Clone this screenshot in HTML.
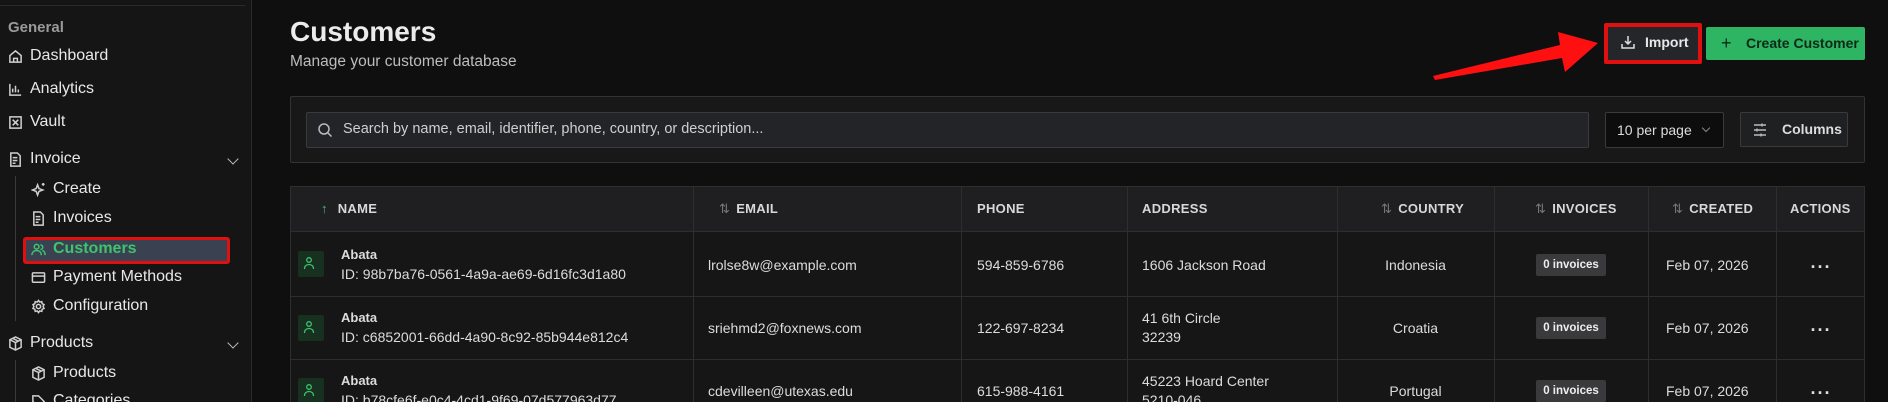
<!DOCTYPE html>
<html style="width:1888px;height:402px;overflow:hidden"><head><meta charset="utf-8"><style>
*{box-sizing:border-box;margin:0;padding:0}
body{width:1888px;height:402px;overflow:hidden;background:#0f0f0f;font-family:"Liberation Sans",sans-serif;color:#e6e6e6;position:relative}
.abs{position:absolute}
.sb{left:0;top:0;width:252px;height:402px;background:#151515;border-right:1px solid #2a2a2a}
.si{position:absolute;font-size:16px;color:#e8e8e8;display:flex;align-items:center;white-space:nowrap}
.si svg{width:15px;height:15px;margin-right:7px;stroke:#d0d0d0;fill:none;stroke-width:1.6}
.chev{position:absolute;left:229px;width:8px;height:8px;border-right:1.5px solid #bbb;border-bottom:1.5px solid #bbb;transform:rotate(45deg)}
.tbl{left:290px;top:186px;width:1575px;height:216px;border:1px solid #2e2e2e;border-bottom:none;background:#161616;overflow:hidden}
.hd{position:absolute;left:0;top:0;width:100%;height:45px;background:#1f1f21;border-bottom:1px solid #2e2e2e}
.vl{position:absolute;top:0;width:1px;height:240px;background:#2e2e2e}
.hl{position:absolute;left:0;width:100%;height:1px;background:#2e2e2e}
.ht{position:absolute;top:14px;font-size:13px;font-weight:bold;color:#d8d8d8;letter-spacing:.3px}
.ar{color:#777;font-weight:normal;margin-right:6px}
.c{position:absolute;font-size:14px;color:#dcdcdc;white-space:nowrap}
.cc{position:absolute;font-size:14px;color:#dcdcdc;text-align:center;left:1046px;width:157px}
.av{position:absolute;left:7px;width:26px;height:26px;background:#17301f;border-radius:2px}
.bd{position:absolute;left:1245px;width:70px;height:22px;background:#3a3a3c;font-size:11.5px;font-weight:bold;color:#eee;text-align:center;line-height:22px;border-radius:2px}
.dots{position:absolute;left:1485px;width:90px;text-align:center;font-size:18px;font-weight:bold;color:#ddd;letter-spacing:1px}
</style></head><body>
<div class="abs sb"></div>
<div class="abs" style="left:0;top:5px;width:245px;height:1px;background:#2a2a2a"></div>
<div class="si" style="left:8px;top:19px;color:#9a9a9a;font-weight:bold;font-size:15px">General</div>
<div class="si" style="left:8px;top:47px"><svg viewBox="0 0 16 16"><path d="M2 7l6-5 6 5v7H2z M6 14v-4h4v4"/></svg>Dashboard</div>
<div class="si" style="left:8px;top:80px"><svg viewBox="0 0 16 16"><path d="M2 2v12h12 M5 11V7 M8 11V4 M11 11V8"/></svg>Analytics</div>
<div class="si" style="left:8px;top:113px"><svg viewBox="0 0 16 16"><rect x="2" y="2" width="12" height="12"/><path d="M5 5l6 6M11 5l-6 6"/></svg>Vault</div>
<div class="si" style="left:8px;top:150px"><svg viewBox="0 0 16 16"><path d="M3 1h7l3 3v11H3z M5 6h5M5 9h5M5 12h3"/></svg>Invoice</div>
<div class="chev" style="top:155px"></div>
<div class="abs" style="left:15px;top:176px;width:1px;height:145px;background:#3a3a3a"></div>
<div class="si" style="left:31px;top:180px"><svg viewBox="0 0 16 16"><path d="M7 3l1.5 4 4 1.5-4 1.5L7 14l-1.5-4L1.5 8.5l4-1.5z M13 1v3M11.5 2.5h3"/></svg>Create</div>
<div class="si" style="left:31px;top:209px"><svg viewBox="0 0 16 16"><path d="M3 1h7l3 3v11H3z M5 6h5M5 9h5M5 12h3"/></svg>Invoices</div>
<div class="abs" style="left:23px;top:237px;width:207px;height:27px;border:3px solid #e01010;border-radius:3px;background:#3a4150"></div>
<div class="si" style="left:31px;top:240px;color:#3ec36e;font-weight:bold"><svg viewBox="0 0 16 16" style="stroke:#3ec36e"><circle cx="6" cy="5" r="2.5"/><path d="M1 14c0-3 2-5 5-5s5 2 5 5 M10 3a2.5 2.5 0 010 5 M12 9c2 .5 3 2.5 3 5"/></svg>Customers</div>
<div class="si" style="left:31px;top:268px"><svg viewBox="0 0 16 16"><rect x="1.5" y="3" width="13" height="10" rx="1"/><path d="M1.5 6.5h13"/></svg>Payment Methods</div>
<div class="si" style="left:31px;top:297px"><svg viewBox="0 0 16 16"><circle cx="8" cy="8" r="2.3"/><path d="M8 1.5l1.3 1.8 2.2-.5.4 2.2 2 1-1 2 1 2-2 1-.4 2.2-2.2-.5L8 14.5l-1.3-1.8-2.2.5-.4-2.2-2-1 1-2-1-2 2-1 .4-2.2 2.2.5z"/></svg>Configuration</div>
<div class="si" style="left:8px;top:334px"><svg viewBox="0 0 16 16"><path d="M8 1l6 3v8l-6 3-6-3V4z M2 4l6 3 6-3 M8 7v8 M5 2.5l6 3"/></svg>Products</div>
<div class="chev" style="top:339px"></div>
<div class="abs" style="left:15px;top:360px;width:1px;height:42px;background:#3a3a3a"></div>
<div class="si" style="left:31px;top:364px"><svg viewBox="0 0 16 16"><path d="M8 1l6 3v8l-6 3-6-3V4z M2 4l6 3 6-3 M8 7v8 M5 2.5l6 3"/></svg>Products</div>
<div class="si" style="left:31px;top:392px"><svg viewBox="0 0 16 16"><path d="M2 2h6l6 6-6 6-6-6z"/></svg>Categories</div>

<div class="abs" style="left:290px;top:16px;font-size:28px;font-weight:bold;color:#ececec">Customers</div>
<div class="abs" style="left:290px;top:53px;font-size:15.5px;color:#bdbdbd">Manage your customer database</div>

<svg class="abs" style="left:1420px;top:25px" width="190" height="60" viewBox="0 0 190 60"><polygon points="13,51 140,20 138,7 178,18 145,47 142,33 15,55" fill="#ff1010"/></svg>
<div class="abs" style="left:1604px;top:23px;width:98px;height:41px;border:4px solid #e01010;border-radius:2px;background:#24262a"></div>
<div class="abs" style="left:1620px;top:34px;font-size:14px;font-weight:bold;color:#e8e8e8;display:flex;align-items:center"><svg width="16" height="16" viewBox="0 0 16 16" fill="none" stroke="#ddd" stroke-width="1.5" style="margin-right:9px"><path d="M8 2v8M5 7l3 3 3-3M2 10v4h12v-4"/></svg>Import</div>
<div class="abs" style="left:1706px;top:27px;width:159px;height:33px;background:#2db563;border-radius:2px;font-size:14px;color:#0d2a17;font-weight:bold;line-height:33px"><span style="position:absolute;left:15px;font-size:18px;font-weight:normal">+</span><span style="position:absolute;left:40px">Create Customer</span></div>

<div class="abs" style="left:290px;top:96px;width:1575px;height:67px;border:1px solid #333;background:#181818;border-radius:2px"></div>
<div class="abs" style="left:306px;top:112px;width:1283px;height:36px;border:1px solid #3a3a3a;background:#232427;border-radius:2px"></div>
<svg class="abs" style="left:317px;top:122px" width="16" height="16" viewBox="0 0 16 16" fill="none" stroke="#bbb" stroke-width="1.5"><circle cx="7" cy="7" r="5"/><path d="M11 11l3.5 3.5"/></svg>
<div class="abs" style="left:343px;top:121px;font-size:14.5px;color:#cfcfcf">Search by name, email, identifier, phone, country, or description...</div>
<div class="abs" style="left:1605px;top:112px;width:119px;height:36px;border:1px solid #3a3a3a;background:#0d0d0d;border-radius:2px"></div>
<div class="abs" style="left:1617px;top:122px;font-size:14px;color:#ddd">10 per page</div>
<div class="abs" style="left:1703px;top:125px;width:6px;height:6px;border-right:1px solid #888;border-bottom:1px solid #888;transform:rotate(45deg)"></div>
<div class="abs" style="left:1740px;top:112px;width:108px;height:35px;border:1px solid #3a3a3a;background:#1f2022;border-radius:2px"></div>
<svg class="abs" style="left:1752px;top:122px" width="16" height="16" viewBox="0 0 16 16" fill="none" stroke="#bbb" stroke-width="1.4"><path d="M2 3h12M2 8h12M2 13h12M10 1.5v3M5 6.5v3M9 11.5v3"/></svg>
<div class="abs" style="left:1782px;top:121px;font-size:14px;font-weight:bold;color:#ddd">Columns</div>

<div class="abs tbl">
<div class="hd"></div>
<div class="vl" style="left:402px"></div><div class="vl" style="left:670px"></div><div class="vl" style="left:836px"></div><div class="vl" style="left:1046px"></div><div class="vl" style="left:1203px"></div><div class="vl" style="left:1357px"></div><div class="vl" style="left:1485px"></div>
<div class="hl" style="top:109px"></div><div class="hl" style="top:172px"></div>
<div class="ht" style="left:30px"><span class="ar" style="color:#3ec36e">↑</span> NAME</div>
<div class="ht" style="left:428px"><span class="ar">⇅</span>EMAIL</div>
<div class="ht" style="left:686px">PHONE</div>
<div class="ht" style="left:851px">ADDRESS</div>
<div class="ht" style="left:1090px"><span class="ar">⇅</span>COUNTRY</div>
<div class="ht" style="left:1244px"><span class="ar">⇅</span>INVOICES</div>
<div class="ht" style="left:1381px"><span class="ar">⇅</span>CREATED</div>
<div class="ht" style="left:1499px">ACTIONS</div>

<div class="av" style="top:64px"></div>
<div class="c" style="left:50px;top:60px;font-weight:bold;font-size:13px">Abata</div>
<div class="c" style="left:50px;top:79px">ID: 98b7ba76-0561-4a9a-ae69-6d16fc3d1a80</div>
<div class="c" style="left:417px;top:70px">lrolse8w@example.com</div>
<div class="c" style="left:686px;top:70px">594-859-6786</div>
<div class="c" style="left:851px;top:70px">1606 Jackson Road</div>
<div class="cc" style="top:70px">Indonesia</div>
<div class="bd" style="top:67px">0 invoices</div>
<div class="c" style="left:1375px;top:70px">Feb 07, 2026</div>
<div class="dots" style="top:70px">···</div>

<div class="av" style="top:128px"></div>
<div class="c" style="left:50px;top:123px;font-weight:bold;font-size:13px">Abata</div>
<div class="c" style="left:50px;top:142px">ID: c6852001-66dd-4a90-8c92-85b944e812c4</div>
<div class="c" style="left:417px;top:133px">sriehmd2@foxnews.com</div>
<div class="c" style="left:686px;top:133px">122-697-8234</div>
<div class="c" style="left:851px;top:123px">41 6th Circle</div>
<div class="c" style="left:851px;top:142px">32239</div>
<div class="cc" style="top:133px">Croatia</div>
<div class="bd" style="top:130px">0 invoices</div>
<div class="c" style="left:1375px;top:133px">Feb 07, 2026</div>
<div class="dots" style="top:133px">···</div>

<div class="av" style="top:191px"></div>
<div class="c" style="left:50px;top:186px;font-weight:bold;font-size:13px">Abata</div>
<div class="c" style="left:50px;top:205px">ID: b78cfe6f-e0c4-4cd1-9f69-07d577963d77</div>
<div class="c" style="left:417px;top:196px">cdevilleen@utexas.edu</div>
<div class="c" style="left:686px;top:196px">615-988-4161</div>
<div class="c" style="left:851px;top:186px">45223 Hoard Center</div>
<div class="c" style="left:851px;top:205px">5210-046</div>
<div class="cc" style="top:196px">Portugal</div>
<div class="bd" style="top:193px">0 invoices</div>
<div class="c" style="left:1375px;top:196px">Feb 07, 2026</div>
<div class="dots" style="top:196px">···</div>
</div>
<svg class="abs" style="left:303px;top:256px" width="12" height="14" viewBox="0 0 12 14" fill="none" stroke="#3ec36e" stroke-width="1.3"><circle cx="6" cy="4" r="2.3"/><path d="M1.5 13c0-3 2-4.5 4.5-4.5s4.5 1.5 4.5 4.5"/></svg>
<svg class="abs" style="left:303px;top:320px" width="12" height="14" viewBox="0 0 12 14" fill="none" stroke="#3ec36e" stroke-width="1.3"><circle cx="6" cy="4" r="2.3"/><path d="M1.5 13c0-3 2-4.5 4.5-4.5s4.5 1.5 4.5 4.5"/></svg>
<svg class="abs" style="left:303px;top:383px" width="12" height="14" viewBox="0 0 12 14" fill="none" stroke="#3ec36e" stroke-width="1.3"><circle cx="6" cy="4" r="2.3"/><path d="M1.5 13c0-3 2-4.5 4.5-4.5s4.5 1.5 4.5 4.5"/></svg>
</body></html>
